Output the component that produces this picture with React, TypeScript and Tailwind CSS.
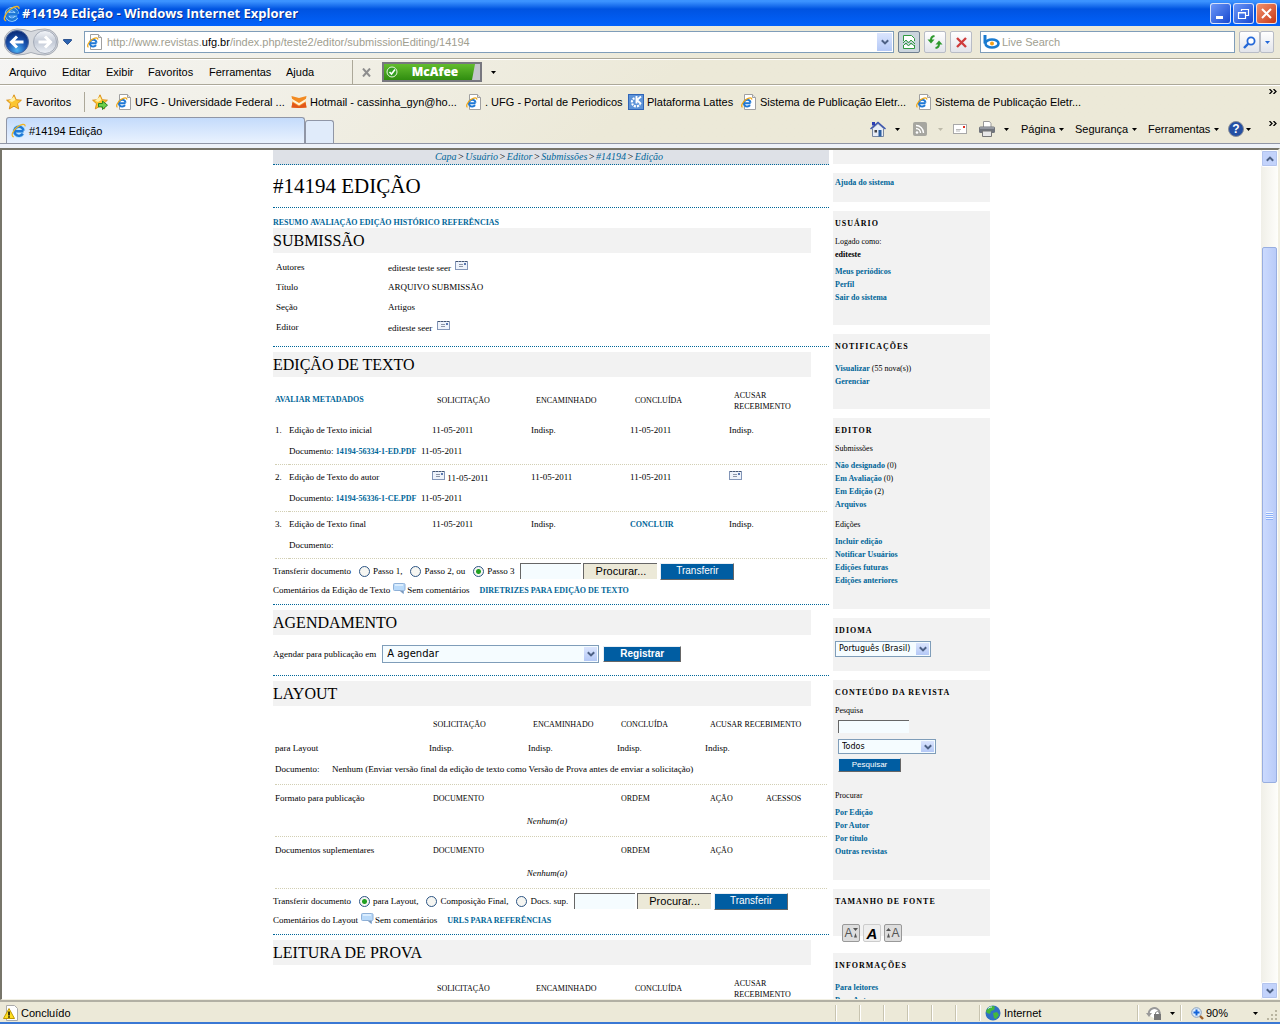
import React from "react";

/* ---------- icons ---------- */

function IeMark({ className = "size-4" }: { className?: string }) {
  return (
    <svg viewBox="0 0 16 16" className={className} aria-hidden="true">
      <path d="M13.300 8.800H4.500M12.600 11.400A4.900 4.900 0 1 1 13.300 8.200" fill="none" stroke="#a5dcfc" strokeWidth="4" />
      <path d="M13.300 8.800H4.500M12.600 11.400A4.900 4.900 0 1 1 13.300 8.200" fill="none" stroke="#1f78d6" strokeWidth="2.600" />
      <path d="M3 14.800C-.6 14.400 1.600 8 7 4 11 1 15.500.200 15 3.600" fill="none" stroke="#f2b524" strokeWidth="1.300" />
    </svg>
  );
}

function PageIcon() {
  return (
    <svg viewBox="0 0 16 16" className="size-4 shrink-0" aria-hidden="true">
      <path d="M3.500.500h8l3 3v12h-11z" fill="#fff" stroke="#a0a0a0" />
      <path d="M11.500.500v3h3" fill="#e4e4e4" stroke="#a0a0a0" />
      <path d="M9.600 9.200H3.200M9 11.200A3.400 3.400 0 1 1 9.600 8.600" fill="none" stroke="#1f78d6" strokeWidth="2" />
      <path d="M1.500 13.300C-.6 12.500 1.500 8 5 5.600 8 3.600 11 3.200 10.700 5.600" fill="none" stroke="#f0a818" strokeWidth="1.200" />
    </svg>
  );
}

const STAR = "M8 .8l2.200 4.900 5.200.5-3.900 3.500 1.200 5.200L8 12.200l-4.700 2.700 1.200-5.200L.6 6.200l5.200-.5z";

function Star({ add = false }: { add?: boolean }) {
  return (
    <svg viewBox="0 0 16 16" className="size-4 shrink-0" aria-hidden="true">
      <path d={STAR} fill="#fcc630" stroke="#d98a10" strokeWidth=".9" />
      <path d="M8 2.500l1.400 3.600L6 8 3 6.800z" fill="#fff0a8" />
      {add && <path d="M6.500 9.500h4V7l5 4.200-5 4.300v-2.600h-4z" fill="#6bd04a" stroke="#1d7c1d" strokeWidth=".9" />}
    </svg>
  );
}

function Butterfly() {
  return (
    <svg viewBox="0 0 16 16" className="size-4 shrink-0" aria-hidden="true">
      <path d="M.5 2L8 4l7.500-2-1 5 1 6.500L8 14 .5 13.500l1-6z" fill="#f28a22" />
      <path d="M.5 4.500L8 9l7.500-4.500-1 3L8 11.500l-6.500-4z" fill="#fff3d8" />
      <path d="M1.500 8.500L8 12.500l6.500-4 1 5L8 14 .5 13.500z" fill="#e2561a" />
    </svg>
  );
}

function GearK() {
  return (
    <svg viewBox="0 0 16 16" className="size-4 shrink-0" aria-hidden="true">
      <rect width="16" height="16" fill="#2f65b8" />
      <rect x="1" y="1" width="14" height="14" fill="#5d93d8" />
      <path d="M6.500 4.200a4.300 4.300 0 1 0 5.500 6" fill="none" stroke="#fff" strokeWidth="2.200" strokeDasharray="2 1" />
      <path d="M8.500 2v7.500M13 2.500L9 6l4 4" fill="none" stroke="#fff" strokeWidth="1.900" />
    </svg>
  );
}

function Caret({ color = "#000" }: { color?: string }) {
  return (
    <svg viewBox="0 0 5 3" className="h-[3px] w-[5px] shrink-0" aria-hidden="true">
      <path d="M0 0h5L2.500 3z" fill={color} />
    </svg>
  );
}

function Chevron({ up = false }: { up?: boolean }) {
  return (
    <svg viewBox="0 0 8 6" className="h-[6px] w-2" aria-hidden="true">
      <path d={up ? "M.8 4.800L4 1.600l3.200 3.200" : "M.8 1.200L4 4.400l3.200-3.200"} fill="none" stroke="#4d6185" strokeWidth="2" />
    </svg>
  );
}

function MailIcon() {
  return (
    <svg viewBox="0 0 13 9" className="inline-block h-[9px] w-[13px] align-[1px]" aria-hidden="true">
      <rect x=".5" y=".5" width="12" height="8" fill="#eef3fb" stroke="#8396b8" />
      <path d="M1 .5h11" stroke="#44546e" strokeDasharray="2 1" />
      <path d="M4 3.500h4M4 5.500h4" stroke="#8d96a8" />
      <rect x="9" y="2" width="2" height="2" fill="#5a78b0" />
    </svg>
  );
}

function Bubble() {
  return (
    <svg viewBox="0 0 13 11" className="mr-px ml-[3px] inline-block h-[11px] w-[13px] self-start" aria-hidden="true">
      <path d="M1.500.5h9q1.500 0 1.500 1v5q0 1-1 1h-.5v3L7 7.500H1.500q-1 0-1-1v-5q0-1 1-1z" fill="#b9dafa" stroke="#8fb1d8" />
      <path d="M2 2h8" stroke="#e6f3ff" strokeWidth="1.500" />
      <path d="M4 7.500h6v3L7 7.700" fill="#7f97b8" />
    </svg>
  );
}

/* ---------- browser chrome ---------- */

const winBtn = "flex size-[21px] items-center justify-center rounded-[3px] border border-white/80";

function TitleBar() {
  return (
    <header className="flex h-[26px] shrink-0 items-center bg-linear-to-b from-[#3c93ff] from-5% via-[#0053e1] via-35% to-[#0262fb] px-[3px]">
      <IeMark className="size-[17px]" />
      <h1 className="ml-0.5 flex-1 font-['Open_Sans','Noto_Sans',sans-serif] text-[13px] font-bold text-white [text-shadow:1px_1px_#0a2f8c]">
        #14194 Edição - Windows Internet Explorer
      </h1>
      <div className="flex gap-[2px]">
        <button aria-label="Minimizar" className={winBtn + " bg-linear-to-br from-[#6c96f8] to-[#1746cf]"}>
          <svg viewBox="0 0 13 13" className="size-[13px]"><path d="M2 9h7v3H2z" fill="#fff" /></svg>
        </button>
        <button aria-label="Restaurar" className={winBtn + " bg-linear-to-br from-[#6c96f8] to-[#1746cf]"}>
          <svg viewBox="0 0 13 13" className="size-[13px]">
            <path d="M4.500 4V2.500h7v6H9M1.500 5.500h7v6h-7zM1.500 6h7M4.500 2.500h7" fill="none" stroke="#fff" strokeWidth="1.200" />
          </svg>
        </button>
        <button aria-label="Fechar" className={winBtn + " bg-linear-to-br from-[#f0906c] to-[#c8350f]"}>
          <svg viewBox="0 0 13 13" className="size-[13px]"><path d="M2 2l9 9M11 2l-9 9" stroke="#fff" strokeWidth="2" /></svg>
        </button>
      </div>
    </header>
  );
}

const toolBtn = "flex h-[22px] items-center justify-center rounded-[2px] border border-[#b8bcc6] bg-linear-to-b from-white to-[#e2e4ea]";

function AddressBar() {
  return (
    <div className="flex h-[33px] shrink-0 items-center border-b border-[#aca899] pr-[6px] pl-[4px]">
      <svg viewBox="0 0 55 28" className="h-7 w-[55px] shrink-0" aria-hidden="true">
        <defs>
          <radialGradient id="back" cx="50%" cy="85%" r="80%">
            <stop offset="0" stopColor="#4fb4f4" /><stop offset=".5" stopColor="#1b57b4" /><stop offset="1" stopColor="#0c2c78" />
          </radialGradient>
          <linearGradient id="fwd" x2="0" y2="1">
            <stop offset="0" stopColor="#f4f6fa" /><stop offset=".5" stopColor="#c3cad6" /><stop offset="1" stopColor="#eef2f8" />
          </linearGradient>
        </defs>
        <path d="M13 1q7 0 14 2.500Q34 1 41 1a13 13 0 0 1 0 26q-7 0-14-2.500Q20 27 13 27A13 13 0 0 1 13 1z" fill="#d6d9de" stroke="#a8adb6" />
        <circle cx="13" cy="14" r="11.500" fill="url(#back)" stroke="#4a669c" />
        <path d="M19.500 14H8M13 8.500L7.500 14l5.500 5.500" fill="none" stroke="#fff" strokeWidth="3" />
        <circle cx="41" cy="14" r="11.500" fill="url(#fwd)" stroke="#a4abb8" />
        <path d="M34.500 14h12M41 8.500l5.500 5.500-5.500 5.500" fill="none" stroke="#fff" strokeWidth="3" />
      </svg>
      <button aria-label="Páginas recentes" className="ml-1 flex w-[9px] justify-center">
        <svg viewBox="0 0 9 6" className="h-[6px] w-[9px]"><path d="M.5.5h8v1L4.500 5.500.500 1.500z" fill="#2a62b0" stroke="#173f80" strokeWidth=".8" /></svg>
      </button>
      <form className="ml-3 flex h-[22px] min-w-0 flex-1 items-center border border-[#7f9db9] bg-white pl-[2px]">
        <PageIcon />
        <label className="relative ml-1 flex-1 leading-5">
          <span className="pointer-events-none absolute inset-y-0 left-0 text-[#a09e90]">
            http://www.revistas.<span className="text-black">ufg.br</span>/index.php/teste2/editor/submissionEditing/14194
          </span>
          <input aria-label="Endereço" className="block h-5 w-full bg-transparent outline-none" />
        </label>
        <button type="button" aria-label="Mostrar endereços" className="mr-px flex h-[18px] w-[15px] items-center justify-center bg-linear-to-b from-[#dbe5fd] to-[#b4c8f6]">
          <Chevron />
        </button>
      </form>
      <button aria-label="Modo de compatibilidade" className="ml-1 flex size-[22px] items-center justify-center rounded-[2px] border border-[#6f7f90] bg-[#cbd5de]">
        <svg viewBox="0 0 14 14" className="size-[14px]">
          <path d="M1.500 6V.500h8l3 3V6M1.500 10v3.500h11V10" fill="#fff" stroke="#2f9a40" />
          <path d="M1 8l3-3 2.500 3 2.500-3 4 4M1 11l3-3 2.500 3 2.500-3 4 3.500" fill="none" stroke="#2f9a40" />
        </svg>
      </button>
      <button aria-label="Atualizar" className={toolBtn + " ml-1 w-[22px]"}>
        <svg viewBox="0 0 16 14" className="h-[14px] w-4">
          <path d="M7.500 1Q4 1.500 4 5M8.500 13q3.500-.5 3.500-4" fill="none" stroke="#2f9a2f" strokeWidth="2" />
          <path d="M.5 4.500h7L4 8.500zM8.500 9.500h7L12 5.500z" fill="#2f9a2f" />
        </svg>
      </button>
      <button aria-label="Parar" className={toolBtn + " ml-1 w-[22px]"}>
        <svg viewBox="0 0 13 13" className="size-[13px]"><path d="M2 2l9 9M11 2l-9 9" stroke="#cf3c3c" strokeWidth="2.400" /></svg>
      </button>
      <label className="ml-2 flex h-[22px] w-[255px] items-center border border-[#7f9db9] bg-white pl-[2px]">
        <svg viewBox="0 0 17 14" className="h-[14px] w-[17px] shrink-0" aria-hidden="true">
          <path d="M2 0v8.500" stroke="#1b7bd0" strokeWidth="3" />
          <ellipse cx="9" cy="8.500" rx="6.500" ry="4" fill="#fff" stroke="#1b7bd0" strokeWidth="2.600" />
          <circle cx="9" cy="8.500" r="2" fill="#f5a01a" />
        </svg>
        <input
          aria-label="Live Search"
          placeholder="Live Search"
          className="ml-[2px] min-w-0 flex-1 bg-transparent outline-none placeholder:text-[#a09e90]"
        />
      </label>
      <button aria-label="Pesquisar na Web" className={toolBtn + " ml-1 w-[21px]"}>
        <svg viewBox="0 0 13 13" className="size-[13px]"><circle cx="8" cy="5" r="3.600" fill="#fff" stroke="#2468d8" strokeWidth="1.800" /><path d="M5.300 7.700L1 12" stroke="#2468d8" strokeWidth="2.400" /></svg>
      </button>
      <button aria-label="Opções de pesquisa" className={toolBtn + " w-[14px]"}><Caret color="#2468d8" /></button>
    </div>
  );
}

const menus = [
  { t: "Arquivo", w: "w-[53px]" },
  { t: "Editar", w: "w-11" },
  { t: "Exibir", w: "w-[42px]" },
  { t: "Favoritos", w: "w-[61px]" },
  { t: "Ferramentas", w: "w-[77px]" },
  { t: "Ajuda", w: "w-[66px]" },
];

function MenuBar() {
  return (
    <nav className="flex h-[26px] shrink-0 items-center border-t border-b border-t-white border-b-[#aca899] pl-[9px]">
      {menus.map((m) => (
        <button key={m.t} className={m.w + " shrink-0 text-left"}>{m.t}</button>
      ))}
      <div className="h-full w-px bg-[#aca899]" />
      <button aria-label="Fechar barra" className="ml-[9px]">
        <svg viewBox="0 0 9 9" className="size-[9px]"><path d="M1 .500l7 8M8 .500l-7 8" stroke="#8e8e8e" strokeWidth="2" /></svg>
      </button>
      <button className="ml-[11px] flex h-5 w-[100px] items-center border-2 border-[#77777f] bg-linear-to-b from-[#62bd2d] to-[#2f8d0f] pl-0.5 font-['Open_Sans',sans-serif] text-xs font-extrabold text-white">
        <svg viewBox="0 0 12 12" className="size-3" aria-hidden="true"><circle cx="6" cy="6" r="5" fill="#35a021" stroke="#e6f6dd" /><path d="M3.500 6l2 2L9 3.500" fill="none" stroke="#fff" strokeWidth="1.600" /></svg>
        <span className="flex-1 text-center leading-4">McAfee</span>
        <svg viewBox="0 0 8 16" className="h-4 w-2" aria-hidden="true"><path d="M3 0h5v16H0z" fill="#c4c6cc" /></svg>
      </button>
      <button aria-label="Opções do McAfee" className="ml-[9px]"><Caret /></button>
    </nav>
  );
}

const favorites = [
  { t: "UFG - Universidade Federal ...", w: "w-[175px]", icon: <PageIcon /> },
  { t: "Hotmail - cassinha_gyn@ho...", w: "w-[175px]", icon: <Butterfly /> },
  { t: ". UFG - Portal de Periodicos", w: "w-[162px]", icon: <PageIcon /> },
  { t: "Plataforma Lattes", w: "w-[113px]", icon: <GearK /> },
  { t: "Sistema de Publicação Eletr...", w: "w-[175px]", icon: <PageIcon /> },
  { t: "Sistema de Publicação Eletr...", w: "w-[175px]", icon: <PageIcon /> },
];

function FavoritesBar() {
  return (
    <nav className="flex h-[32px] shrink-0 items-center border-t border-white pl-[6px]">
      <button className="flex w-[78px] items-center gap-1"><Star />Favoritos</button>
      <div className="h-5 w-px bg-[#aca899]" />
      <button aria-label="Adicionar a Favoritos" className="mr-2 ml-[7px]"><Star add /></button>
      {favorites.map((f, i) => (
        <a key={i} href="#" className={f.w + " flex shrink-0 items-center gap-[3px] whitespace-nowrap"}>{f.icon}{f.t}</a>
      ))}
      <button aria-label="Mais favoritos" className="mr-[3px] mb-5 ml-auto"><More /></button>
    </nav>
  );
}

function More() {
  return (
    <svg viewBox="0 0 8 5" className="h-[5px] w-2"><path d="M.5 0L3 2.500.500 5M4.500 0L7 2.500 4.500 5" fill="none" stroke="#000" strokeWidth="1.300" /></svg>
  );
}

function TabRow() {
  return (
    <div className="flex h-[27px] shrink-0 items-end border-b border-[#9096a6] pl-[6px]">
      <button className="flex h-[26px] w-[299px] items-center gap-[3px] rounded-t-[3px] border border-b-0 border-[#9096a6] bg-linear-to-b from-[#c4dbfb] to-[#e9f2fe] pl-1">
        <IeMark className="size-[15px]" />#14194 Edição
      </button>
      <button aria-label="Nova guia" className="h-[23px] w-[29px] rounded-t-[3px] border border-b-0 border-[#9096a6] bg-[#e0ebfa]" />
      <div className="mb-1 ml-auto flex h-5 items-center">
        <button aria-label="Página inicial" className="mr-[9px]">
          <svg viewBox="0 0 16 16" className="size-4">
            <path d="M2.500 7.500v8h11v-8L8 2.500z" fill="#e8edf6" stroke="#7787a0" />
            <path d="M.5 8L8 1.500 15.500 8" fill="none" stroke="#3b54b0" strokeWidth="1.500" />
            <path d="M2 1h3v3.500H2z" fill="#2c3fb4" /><path d="M8.500 9h3v6.500h-3z" fill="#2d5fa0" /><path d="M4.500 9h2.500v2.500H4.500z" fill="#444" />
          </svg>
        </button>
        <Caret />
        <svg viewBox="0 0 14 14" className="mr-[11px] ml-[13px] size-[14px]" role="img" aria-label="Feeds">
          <rect width="14" height="14" rx="2" fill="#a6a6a0" />
          <circle cx="4" cy="10.500" r="1.300" fill="#fff" /><path d="M3 6.500a4.500 4.500 0 0 1 4.500 4.500M3 3.500A7.500 7.500 0 0 1 10.500 11" fill="none" stroke="#fff" strokeWidth="1.400" />
        </svg>
        <Caret color="#bdbaaa" />
        <svg viewBox="0 0 14 10" className="mr-3 ml-[10px] h-[10px] w-[14px]" role="img" aria-label="Ler email">
          <rect x=".5" y=".5" width="13" height="9" fill="#fff" stroke="#a8a8a8" /><rect x="10" y="2" width="2" height="2" fill="#e03020" /><path d="M3 5.500h5M3 7h4" stroke="#bbb" />
        </svg>
        <svg viewBox="0 0 16 16" className="mr-[9px] size-4" role="img" aria-label="Imprimir">
          <path d="M4.500 6V.500h6l1.500 2V6" fill="#fff" stroke="#999" /><rect y="5.500" width="16" height="6.500" rx="1.500" fill="#70747c" /><path d="M1 7h14" stroke="#b8bcc4" /><path d="M3.500 10h9v5.500h-9z" fill="#e8e8e8" stroke="#777" />
        </svg>
        <Caret />
        <button className="ml-3 flex w-[54px] items-center gap-1">Página<Caret /></button>
        <button className="flex w-[73px] items-center gap-1">Segurança<Caret /></button>
        <button className="flex w-20 items-center gap-1">Ferramentas<Caret /></button>
        <button aria-label="Ajuda" className="flex items-center gap-[2px]">
          <span className="flex size-4 items-center justify-center rounded-full border border-[#8a8f98] bg-[#2450a4] text-xs leading-none font-bold text-white">?</span>
          <Caret />
        </button>
        <button aria-label="Mais comandos" className="mr-[3px] mb-3 ml-[18px]"><More /></button>
      </div>
    </div>
  );
}

const scrollBtn = "flex size-[17px] shrink-0 items-center justify-center rounded-[2px] border border-white bg-[#c3d3fb] outline outline-[#b3c4ee] -outline-offset-2";

function ScrollBar() {
  return (
    <div className="flex w-[17px] shrink-0 flex-col items-center bg-linear-to-r from-[#f0efe8] to-[#fefefb]">
      <button aria-label="Rolar para cima" className={scrollBtn}><Chevron up /></button>
      <div className="basis-20" />
      <div className="flex w-[15px] flex-1 flex-col items-center justify-center gap-px rounded-[2px] border border-[#98aee0] bg-linear-to-r from-[#cbdafe] to-[#b9cbf8]">
        {[0, 1, 2, 3].map((i) => <span key={i} className="h-px w-[7px] bg-[#eef4fe] shadow-[0_1px_#8cb0f8]" />)}
      </div>
      <div className="basis-[199px]" />
      <button aria-label="Rolar para baixo" className={scrollBtn}><Chevron /></button>
    </div>
  );
}

function StatusBar() {
  const sep = "h-4 w-px bg-[#c8c4b0] shadow-[1px_0_#fff]";
  return (
    <footer className="flex h-[24px] shrink-0 items-center border-t-2 border-b-2 border-t-[#b2b0a4] border-b-[#3a78d4] bg-[#ece9d8] pt-0.5 pl-[3px]">
      <svg viewBox="0 0 16 16" className="size-4" aria-hidden="true">
        <path d="M3.500.500h8l3 3v12h-11z" fill="#fff" stroke="#aaa" /><path d="M6 3.500L11.500 13.500H.500z" fill="#ffe020" stroke="#c09800" /><path d="M6 6.500v4M6 11.300v1.400" stroke="#000" strokeWidth="1.500" />
      </svg>
      <span className="ml-[2px] flex-1">Concluído</span>
      <div className="flex w-[150px] items-center justify-between pr-[5px]">
        {[0, 1, 2, 3, 4, 5, 6].map((i) => <span key={i} className={sep} />)}
      </div>
      <svg viewBox="0 0 16 16" className="size-4" aria-hidden="true">
        <circle cx="8" cy="8" r="7.500" fill="#2f70c4" /><path d="M4 2q4-2 6 0l-1 3-3 1-1 3-3-1-1-2zM8 8l4-1 2 3-3 4-2-1z" fill="#46b83c" /><path d="M3 3.500Q5 1.500 7 2" stroke="#d8f0ff" fill="none" />
      </svg>
      <span className="ml-[3px] w-[133px]">Internet</span>
      <span className={sep} />
      <svg viewBox="0 0 16 14" className="ml-2 h-[14px] w-4" aria-hidden="true">
        <path d="M3 9a5.500 5.500 0 1 1 6 4" fill="#fff" stroke="#999" strokeWidth="2" /><path d="M0 7h6l-3 4z" fill="#999" /><rect x="8" y="8" width="7" height="6" fill="#777" /><path d="M9.500 8V6.500q2-2 4 0V8" fill="none" stroke="#888" />
      </svg>
      <span className="mr-[5px] ml-2"><Caret /></span>
      <span className={sep} />
      <svg viewBox="0 0 13 13" className="ml-[10px] size-[13px]" aria-hidden="true">
        <path d="M8 8l4 4" stroke="#a0622c" strokeWidth="2.400" /><circle cx="5.500" cy="5.500" r="4.800" fill="#dcecfc" stroke="#8aa0bc" /><path d="M5.500 2.500v6M2.500 5.500h6" stroke="#1464d8" strokeWidth="2" />
      </svg>
      <button className="ml-[2px] flex w-[52px] items-center justify-between">90%<Caret /></button>
      <svg viewBox="0 0 12 12" className="mt-1 ml-2 size-3" aria-hidden="true">
        <path d="M9 1h2v2H9zM9 5h2v2H9zM9 9h2v2H9zM5 5h2v2H5zM5 9h2v2H5zM1 9h2v2H1z" fill="#b8b4a0" />
      </svg>
      <span className="w-[2px]" />
    </footer>
  );
}

/* ---------- page pieces ---------- */

const link = "font-bold text-[#006699]";
const capsLink = "text-[8px] font-bold uppercase text-[#006699]";
const th = "text-left text-[8px] font-normal uppercase";
const dotted = "border-b border-dotted border-[#006699]";
const rowLine = "border-b border-dotted border-[#d2cfb4]";

function Section({ title, children, last = false }: { title: string; children: React.ReactNode; last?: boolean }) {
  return (
    <section className={(last ? "" : dotted) + " mb-[5px]"}>
      <h3 className="mr-[18px] flex h-[25px] items-center bg-[#f2f2f2] text-base leading-none uppercase">{title}</h3>
      {children}
    </section>
  );
}

function EditHead({ first }: { first?: React.ReactNode }) {
  return (
    <>
      <colgroup>
        <col className="w-[14px]" /><col className="w-[143px]" /><col className="w-[99px]" /><col className="w-[99px]" /><col className="w-[99px]" /><col />
      </colgroup>
      <thead>
        <tr className="h-[41px]">
          <th colSpan={2} className={th + " pt-1"}>{first}</th>
          <th className={th + " pt-1.5 pl-[5px]"}>Solicitação</th>
          <th className={th + " pt-1.5 pl-[5px]"}>Encaminhado</th>
          <th className={th + " pt-1.5 pl-[5px]"}>Concluída</th>
          <th className={th + " pt-1.5 pr-5 pl-[5px] leading-[11px]"}>Acusar recebimento</th>
        </tr>
      </thead>
    </>
  );
}

const steps = [
  { n: "1.", t: "Edição de Texto inicial", mail: false, cells: ["11-05-2011", "Indisp.", "11-05-2011", "Indisp."], doc: "14194-56334-1-ED.PDF" },
  { n: "2.", t: "Edição de Texto do autor", mail: true, cells: ["11-05-2011", "11-05-2011", "11-05-2011", ""], doc: "14194-56336-1-CE.PDF" },
  { n: "3.", t: "Edição de Texto final", mail: false, cells: ["11-05-2011", "Indisp.", "Concluir", "Indisp."], doc: "" },
];

function BlueButton({ children, className }: { children: React.ReactNode; className: string }) {
  return (
    <button type="button" className={className + " flex items-center justify-center border border-t-[#e8eef4] border-l-[#e8eef4] border-r-[#666] border-b-[#666] bg-[#005da2] font-['Liberation_Sans',sans-serif] leading-none text-white"}>
      {children}
    </button>
  );
}

function Upload({ name, options, selected }: { name: string; options: string[]; selected: number }) {
  return (
    <form className="flex h-6 items-center">
      <span className="mr-2">Transferir documento</span>
      {options.map((o, i) => (
        <label key={o} className="mr-2 flex items-center gap-[3px]">
          <input
            type="radio"
            name={name}
            defaultChecked={i === selected}
            className="size-[11px] appearance-none rounded-full border border-[#2d5584] bg-[#f6f6f2] checked:bg-[radial-gradient(circle,#21a121_0_2px,#f6f6f2_3px)]"
          />
          {o}
        </label>
      ))}
      <input aria-label="Arquivo" className="-ml-[2px] h-4 w-[61px] border-t border-l border-[#666] bg-[#f5fcff] outline-none" />
      <button type="button" className="ml-[2px] h-4 w-[74px] border-t border-l border-[#666] bg-[#ece9d8] font-['Liberation_Sans',sans-serif] text-[11px] leading-none">Procurar...</button>
      <BlueButton className="ml-[3px] h-[17px] w-[74px] text-[10px]">Transferir</BlueButton>
    </form>
  );
}

function Comments({ label, action }: { label: string; action: string }) {
  return (
    <p className="mb-[6px] flex h-[15px] items-center">
      {label}<Bubble />Sem comentários
      <a href="#" className={capsLink + " ml-[10px]"}>{action}</a>
    </p>
  );
}

function Select({ label, value, className, box }: { label: string; value: string; className: string; box: string }) {
  return (
    <span className={box + " relative flex border border-[#7f9db9] bg-[#f5fcff]"}>
      <select aria-label={label} className={className + " w-full appearance-none font-['DejaVu_Sans',sans-serif] outline-none"}>
        <option>{value}</option>
      </select>
      <span className="pointer-events-none absolute inset-y-px right-px flex w-[13px] items-center justify-center bg-linear-to-b from-[#dbe5fd] to-[#b4c8f6]"><Chevron /></span>
    </span>
  );
}

function FileGroup({ label, heads }: { label: string; heads: string[] }) {
  return (
    <>
      <tr className="h-[26px]">
        <td>{label}</td>
        <th colSpan={2} className={th + " pl-1"}>Documento</th>
        <th className={th + " pl-1"}>Ordem</th>
        <th className={th + " pl-[5px]"}>Ação</th>
        <th className={th + " pl-1"}>{heads[0]}</th>
      </tr>
      <tr className="h-[26px]">
        <td colSpan={6} className={rowLine + " pr-2 pb-1 text-center italic"}>Nenhum(a)</td>
      </tr>
    </>
  );
}

function Crumb({ children }: { children: React.ReactNode }) {
  return <a href="#" className="text-[#006699]">{children}</a>;
}

function MainColumn() {
  return (
    <main className="w-[556px] shrink-0 text-[9px] leading-[11px]">
      <nav className={dotted + " flex h-[15px] items-center justify-center gap-px bg-[#dee1e7] pr-1 pb-0.5 text-[10px] italic"}>
        <Crumb>Capa</Crumb>&gt;<Crumb>Usuário</Crumb>&gt;<Crumb>Editor</Crumb>&gt;<Crumb>Submissões</Crumb>&gt;<Crumb>#14194</Crumb>&gt;<Crumb>Edição</Crumb>
      </nav>
      <h2 className={dotted + " flex h-[43px] items-center text-[21px] leading-none"}>#14194 EDIÇÃO</h2>
      <nav className={capsLink + " flex h-5 items-center gap-[2px] pt-2"}>
        <a href="#">Resumo</a><a href="#">Avaliação</a><a href="#">Edição</a><a href="#">Histórico</a><a href="#">Referências</a>
      </nav>

      <Section title="Submissão">
        <table className="mt-1 mb-[9px] ml-[3px] table-fixed">
          <tbody>
            <tr className="h-5"><td className="w-28">Autores</td><td>editeste teste seer&nbsp; <MailIcon /></td></tr>
            <tr className="h-5"><td>Título</td><td>ARQUIVO SUBMISSÃO</td></tr>
            <tr className="h-5"><td>Seção</td><td>Artigos</td></tr>
            <tr className="h-5"><td>Editor</td><td>editeste seer&nbsp; <MailIcon /></td></tr>
          </tbody>
        </table>
      </Section>

      <Section title="Edição de texto">
        <div className="px-[2px]">
          <table className="w-full table-fixed border-separate border-spacing-0">
            <EditHead first={<a href="#" className={capsLink}>Avaliar metadados</a>} />
            <tbody>
              {steps.map((s) => (
                <React.Fragment key={s.n}>
                  <tr className="h-6">
                    <td>{s.n}</td>
                    <td>{s.t}</td>
                    {s.cells.map((c, i) => (
                      <td key={i}>
                        {s.mail && (i === 0 || i === 3) && <><MailIcon />{" "}</>}
                        {c === "Concluir" ? <a href="#" className={capsLink}>{c}</a> : c}
                      </td>
                    ))}
                  </tr>
                  <tr className="h-[23px]">
                    <td className={rowLine} />
                    <td colSpan={5} className={rowLine + " pb-1"}>
                      Documento: {s.doc && <><a href="#" className={capsLink}>{s.doc}</a>&nbsp; 11-05-2011</>}
                    </td>
                  </tr>
                </React.Fragment>
              ))}
            </tbody>
          </table>
        </div>
        <Upload name="passo" options={["Passo 1,", "Passo 2, ou", "Passo 3"]} selected={2} />
        <Comments label="Comentários da Edição de Texto" action="Diretrizes para edição de texto" />
      </Section>

      <Section title="Agendamento">
        <form className="flex h-10 items-center pb-0.5">
          Agendar para publicação em
          <Select label="Agendar para publicação em" value="A agendar" box="ml-[6px] h-[18px] w-[217px]" className="pl-1 text-[10px] leading-4" />
          <BlueButton className="ml-1 h-4 w-[78px] text-[10px] font-bold">Registrar</BlueButton>
        </form>
      </Section>

      <Section title="Layout">
        <div className="px-[2px]">
          <table className="w-full table-fixed border-separate border-spacing-0">
            <colgroup>
              <col className="w-[154px]" /><col className="w-[99px]" /><col className="w-[89px]" /><col className="w-[88px]" /><col className="w-[57px]" /><col />
            </colgroup>
            <thead>
              <tr className="h-[33px]">
                <td />
                <th className={th + " pt-1 pl-1"}>Solicitação</th>
                <th className={th + " pt-1 pl-[5px]"}>Encaminhado</th>
                <th className={th + " pt-1 pl-1"}>Concluída</th>
                <th colSpan={2} className={th + " pt-1 pl-[5px]"}>Acusar recebimento</th>
              </tr>
            </thead>
            <tbody>
              <tr className="h-[19px]">
                <td>para Layout</td><td>Indisp.</td><td>Indisp.</td><td>Indisp.</td><td colSpan={2}>Indisp.</td>
              </tr>
              <tr className="h-[27px]">
                <td colSpan={6} className={rowLine + " pb-[3px]"}>
                  <span className="inline-block w-[57px]">Documento:</span>
                  Nenhum (Enviar versão final da edição de texto como Versão de Prova antes de enviar a solicitação)
                </td>
              </tr>
              <FileGroup label="Formato para publicação" heads={["Acessos"]} />
              <FileGroup label="Documentos suplementares" heads={[]} />
            </tbody>
          </table>
        </div>
        <Upload name="layout" options={["para Layout,", "Composição Final,", "Docs. sup."]} selected={0} />
        <Comments label="Comentários do Layout" action="URLs para referências" />
      </Section>

      <Section title="Leitura de prova" last>
        <div className="px-[2px]">
          <table className="w-full table-fixed border-separate border-spacing-0"><EditHead /></table>
        </div>
      </Section>
    </main>
  );
}

function Box({ title, children, className = "" }: { title?: string; children?: React.ReactNode; className?: string }) {
  return (
    <section className={className + " bg-[#f2f2f2] px-[2px] pt-[7px]"}>
      {title && <h4 className="text-[8px] leading-3 font-bold tracking-[1px] uppercase">{title}</h4>}
      {children}
    </section>
  );
}

function Links({ items, className = "mt-1" }: { items: [string, string?][]; className?: string }) {
  return (
    <ul className={className}>
      {items.map(([t, n]) => <li key={t}><a href="#" className={link}>{t}</a>{n && " " + n}</li>)}
    </ul>
  );
}

function FontIcon({ kind }: { kind: "down" | "normal" | "up" }) {
  const label = { down: "Diminuir fonte", normal: "Fonte padrão", up: "Aumentar fonte" }[kind];
  const shade = kind === "normal" ? "border-[#ccc] bg-[#eee] text-[15px] font-bold italic text-black" : "border-[#999] bg-[#ddd] text-[12px] text-[#555]";
  return (
    <button aria-label={label} className={shade + " flex h-[18px] w-[18px] items-center justify-center rounded-[2px] border font-['Liberation_Sans',sans-serif] leading-none"}>
      {kind === "up" && <svg viewBox="0 0 5 10" className="h-[10px] w-[5px]"><path d="M0 3L2.500 0 5 3zM1 9.500L2.500 5 4 9.500" fill="#555" /></svg>}
      A
      {kind === "down" && <svg viewBox="0 0 5 10" className="h-[10px] w-[5px]"><path d="M0 0h5L2.500 3zM1 9.500L2.500 5 4 9.500" fill="#555" /></svg>}
    </button>
  );
}

function Sidebar() {
  return (
    <aside className="flex w-[157px] shrink-0 flex-col gap-[9px] text-[8px] leading-[13px]">
      <Box className="min-h-[14px]" />
      <Box className="min-h-[29px]"><Links items={[["Ajuda do sistema"]]} className="-mt-1" /></Box>
      <Box title="Usuário" className="min-h-[114px]">
        <p className="mt-[5px]">Logado como:</p>
        <p className="font-bold">editeste</p>
        <Links items={[["Meus periódicos"], ["Perfil"], ["Sair do sistema"]]} />
      </Box>
      <Box title="Notificações" className="min-h-[75px]">
        <Links items={[["Visualizar", "(55 nova(s))"], ["Gerenciar"]]} className="mt-[9px]" />
      </Box>
      <Box title="Editor" className="min-h-[191px]">
        <p className="mt-[5px]">Submissões</p>
        <Links items={[["Não designado", "(0)"], ["Em Avaliação", "(0)"], ["Em Edição", "(2)"], ["Arquivos"]]} />
        <p className="mt-[7px]">Edições</p>
        <Links items={[["Incluir edição"], ["Notificar Usuários"], ["Edições futuras"], ["Edições anteriores"]]} />
      </Box>
      <Box title="Idioma" className="min-h-[53px]">
        <Select label="Idioma" value="Português (Brasil)" box="mt-1 h-4 w-24" className="pl-[3px] text-[8px] leading-[14px]" />
      </Box>
      <Box title="Conteúdo da revista" className="min-h-[200px]">
        <form className="mt-[5px]">
          <label htmlFor="busca" className="block">Pesquisa</label>
          <input id="busca" className="mt-[3px] ml-[3px] block h-[13px] w-[71px] border-t border-l border-[#666] bg-[#f5fcff] outline-none" />
          <Select label="Campo de pesquisa" value="Todos" box="mt-[6px] ml-[3px] h-[15px] w-[98px]" className="pl-[3px] text-[8px] leading-[13px]" />
          <BlueButton className="mt-1 ml-[3px] h-[14px] w-[63px] text-[8px]">Pesquisar</BlueButton>
        </form>
        <p className="mt-[17px]">Procurar</p>
        <Links items={[["Por Edição"], ["Por Autor"], ["Por título"], ["Outras revistas"]]} />
      </Box>
      <Box title="Tamanho de fonte" className="h-[47px]">
        <div className="mt-4 flex gap-[3px] pl-[7px]"><FontIcon kind="down" /><FontIcon kind="normal" /><FontIcon kind="up" /></div>
      </Box>
      <Box title="Informações" className="mt-2 pb-4">
        <Links items={[["Para leitores"], ["Para Autores"]]} className="mt-[9px]" />
      </Box>
    </aside>
  );
}

export default function App() {
  return (
    <div className="flex h-screen flex-col overflow-hidden bg-linear-to-br from-[#f6f6f6] to-[#ece9d8] to-30% font-['Liberation_Sans',sans-serif] text-[11px] leading-[14px] text-black">
      <TitleBar />
      <AddressBar />
      <MenuBar />
      <FavoritesBar />
      <TabRow />
      <div className="flex min-h-0 flex-1 border-t-4 border-[#eef2f9] bg-white">
        <div className="flex min-w-0 flex-1 border-t-2 border-r-2 border-b border-l-2 border-t-[#77756a] border-r-[#f1efe2] border-b-[#f1efe2] border-l-[#77756a]">
          <div className="min-w-0 flex-1 overflow-hidden font-['Liberation_Serif',serif]">
            <div className="mx-auto flex w-full max-w-[717px] gap-1">
              <MainColumn />
              <Sidebar />
            </div>
          </div>
          <ScrollBar />
        </div>
      </div>
      <StatusBar />
    </div>
  );
}
